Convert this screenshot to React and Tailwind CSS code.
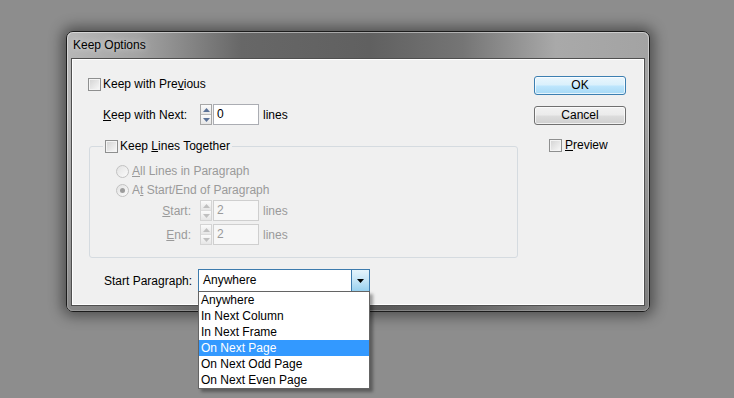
import React from 'react';

const font = { fontFamily: '"Liberation Sans", Arial, sans-serif' };

// Win7-style checkbox
const Checkbox = ({ disabled }) => (
    <div className={`w-[13px] h-[13px] shrink-0 border ${disabled ? 'border-[#c4c4c4]' : 'border-[#8e8f8f]'} bg-gradient-to-br from-[#d2d2d2] to-[#fafafa] shadow-[inset_0_0_0_1px_#f4f4f4]`} />
);

const Radio = ({ checked }) => (
    <div className="w-[13px] h-[13px] shrink-0 rounded-full border border-[#c2c2c2] bg-gradient-to-br from-[#e2e2e2] to-[#fbfbfb] flex items-center justify-center">
        {checked && <div className="w-[5px] h-[5px] rounded-full bg-[#9c9c9c]" />}
    </div>
);

const Spinner = ({ value, disabled }) => (
    <div className="flex h-[21px]">
        <div className={`w-[12px] flex flex-col border ${disabled ? 'border-[#d4d4d4]' : 'border-[#a7a7a7]'} bg-[#f4f4f4]`}>
            <div className={`flex-1 flex items-center justify-center border-b ${disabled ? 'border-[#dcdcdc]' : 'border-[#b9b9b9]'} bg-gradient-to-b from-[#fbfbfb] to-[#e6e6e6]`}>
                <svg width="7" height="4" viewBox="0 0 7 4"><path d="M0 4 L3.5 0 L7 4 Z" fill={disabled ? '#c0c0c0' : '#5b7297'} /></svg>
            </div>
            <div className="flex-1 flex items-center justify-center bg-gradient-to-b from-[#fbfbfb] to-[#e6e6e6]">
                <svg width="7" height="4" viewBox="0 0 7 4"><path d="M0 0 L3.5 4 L7 0 Z" fill={disabled ? '#c0c0c0' : '#5b7297'} /></svg>
            </div>
        </div>
        <div className={`w-[46px] border ${disabled ? 'border-[#cfcfcf] bg-[#f7f7f7] text-[#9a9a9a]' : 'border-[#abadb3] bg-white text-black'} ml-[1px] pl-[3px] text-[12px] leading-[19px]`}>
            {value}
        </div>
    </div>
);

export default function App() {
    return (
        <div className="w-[734px] h-[398px] bg-[#8d8d8d] pl-[66px] pt-[31px] overflow-hidden" style={font}>
            {/* Window */}
            <div className="w-[584px] h-[281px] rounded-[7px] border border-[#1c1c1c] shadow-[0_0_14px_4px_rgba(0,0,0,0.45)] bg-[linear-gradient(to_right,#b7b7b7_0%,#a4a4a4_12%,#676767_30%,#606060_52%,#757575_68%,#a9a9a9_84%,#a3a3a3_100%)] flex flex-col pl-[4px] pr-[4px] pb-[5px] relative">
                <div className="absolute inset-0 rounded-[6px] shadow-[inset_0_0_0_1px_rgba(255,255,255,0.45)] pointer-events-none" />
                <div className="absolute left-0 right-0 bottom-0 h-[200px] rounded-b-[6px] bg-gradient-to-b from-transparent to-[rgba(80,80,80,0.45)] pointer-events-none" />
                {/* Title */}
                <div className="h-[26px] flex items-center pl-[2px] pb-[1px] text-[12px] text-black relative [text-shadow:0_0_6px_rgba(255,255,255,0.7)]">
                    Keep Options
                </div>

                {/* Panel */}
                <div className="flex-1 border border-[#4f4f4f] bg-[#f0f0f0] shadow-[inset_0_0_0_1px_#ffffff] flex relative text-[12px] text-black">
                    {/* Left column */}
                    <div className="w-[462px] pl-[16px] pt-[19px] flex flex-col">
                        <div className="flex items-center h-[13px] gap-[2px]">
                            <Checkbox />
                            <span className="leading-[13px]">Keep with Pre<u>v</u>ious</span>
                        </div>

                        <div className="flex items-center h-[21px] mt-[13px] ml-[15px]">
                            <span className="w-[97px]"><u>K</u>eep with Next:</span>
                            <Spinner value="0" />
                            <span className="ml-[4px]">lines</span>
                        </div>

                        <fieldset className="ml-[1px] mt-[15px] w-[429px] border border-[#d5dbe0] rounded-[3px] pb-[12px]">
                            <legend className="ml-[13px] px-[2px] flex items-center h-[13px] gap-[2px]">
                                <Checkbox />
                                <span className="leading-[13px]">Keep <u>L</u>ines Together</span>
                            </legend>
                            <div className="flex flex-col text-[#9a9a9a]">
                                <div className="flex items-center h-[16px] mt-[10px] ml-[26px] gap-[3px]">
                                    <Radio />
                                    <span><u>A</u>ll Lines in Paragraph</span>
                                </div>
                                <div className="flex items-center h-[16px] mt-[3px] ml-[26px] gap-[3px]">
                                    <Radio checked />
                                    <span>A<u>t</u> Start/End of Paragraph</span>
                                </div>
                                <div className="flex items-center h-[21px] mt-[2px]">
                                    <span className="w-[110px] text-right pr-[9px]"><u>S</u>tart:</span>
                                    <Spinner value="2" disabled />
                                    <span className="ml-[4px]">lines</span>
                                </div>
                                <div className="flex items-center h-[21px] mt-[3px]">
                                    <span className="w-[110px] text-right pr-[9px]"><u>E</u>nd:</span>
                                    <Spinner value="2" disabled />
                                    <span className="ml-[4px]">lines</span>
                                </div>
                            </div>
                        </fieldset>

                        <div className="flex items-center h-[23px] mt-[11px] ml-[16px]">
                            <span className="w-[94px]">Start Para<u>g</u>raph:</span>
                            <div className="relative w-[172px] h-[23px] border border-[#3d7bad] bg-white flex">
                                <div className="flex-1 pl-[4px] leading-[21px]">Anywhere</div>
                                <div className="w-[18px] border-l border-[#3d7bad] bg-gradient-to-b from-[#e5f4fc] via-[#c4e5f6] to-[#98d1ef] flex items-center justify-center">
                                    <svg width="7" height="4" viewBox="0 0 7 4"><path d="M0 0 L3.5 4 L7 0 Z" fill="#000" /></svg>
                                </div>
                                {/* Dropdown list */}
                                <div className="absolute left-[-1px] top-[21px] w-[172px] border border-[#646464] bg-white shadow-[3px_3px_3px_rgba(0,0,0,0.35)] z-10 flex flex-col">
                                    {['Anywhere', 'In Next Column', 'In Next Frame', 'On Next Page', 'On Next Odd Page', 'On Next Even Page'].map((item) => (
                                        <div
                                            key={item}
                                            className={`h-[16px] leading-[16px] pl-[2px] ${item === 'On Next Page' ? 'bg-[#3399ff] text-white' : 'text-black'}`}
                                        >
                                            {item}
                                        </div>
                                    ))}
                                </div>
                            </div>
                        </div>
                    </div>

                    {/* Right column */}
                    <div className="w-[92px] pt-[17px] flex flex-col">
                        <button className="h-[19px] rounded-[3px] border border-[#3c7fb1] bg-[linear-gradient(to_bottom,#eaf6fd_0%,#d9f0fc_48%,#bee6fd_52%,#a7d9f5_100%)] shadow-[inset_0_0_0_1px_rgba(255,255,255,0.7)] text-[12px] leading-[17px] text-black">
                            OK
                        </button>
                        <button className="h-[19px] mt-[11px] rounded-[3px] border border-[#707070] bg-[linear-gradient(to_bottom,#f2f2f2_0%,#ebebeb_48%,#dddddd_52%,#cfcfcf_100%)] shadow-[inset_0_0_0_1px_rgba(255,255,255,0.7)] text-[12px] leading-[17px] text-black">
                            Cancel
                        </button>
                        <div className="flex items-center h-[13px] mt-[14px] ml-[15px] gap-[3px]">
                            <Checkbox />
                            <span className="leading-[13px]"><u>P</u>review</span>
                        </div>
                    </div>
                </div>
            </div>
        </div>
    );
}
